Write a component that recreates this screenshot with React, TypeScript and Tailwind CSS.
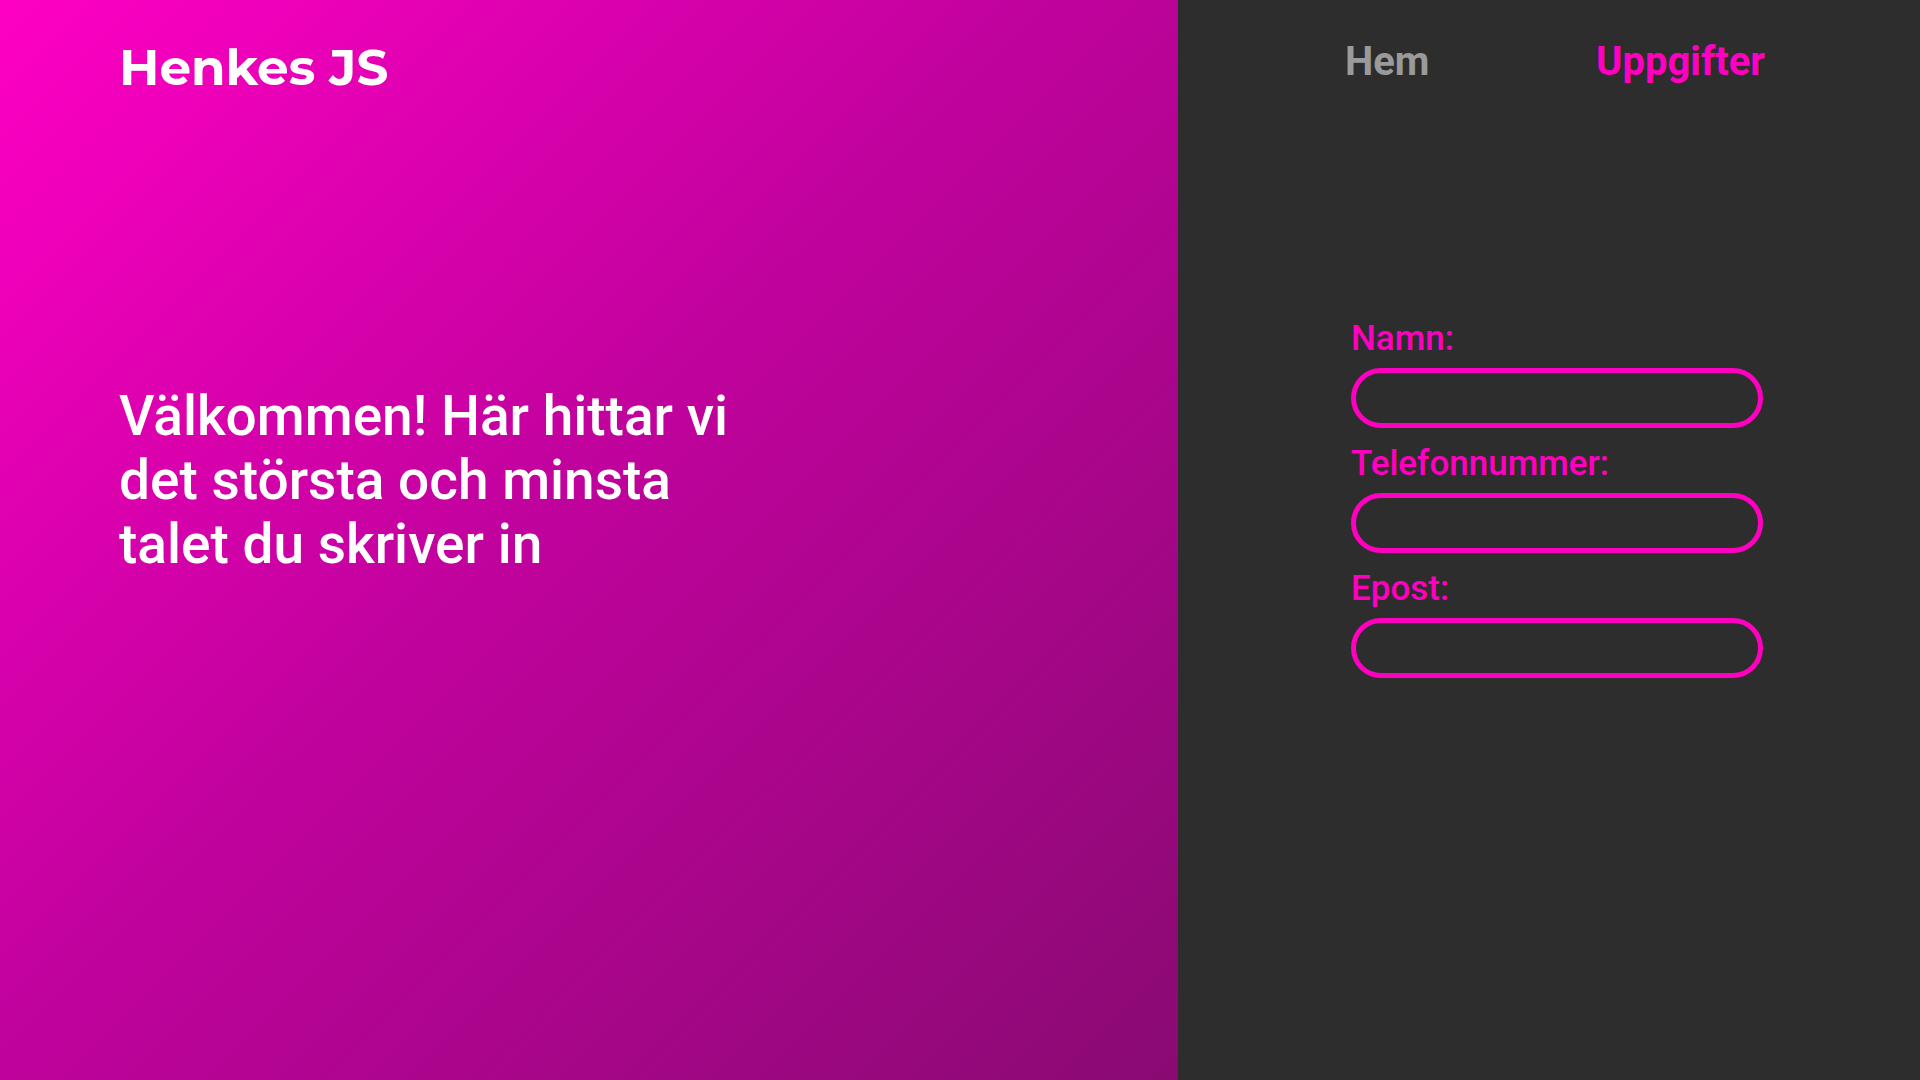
import React from "react"

const fields = ["Namn:", "Telefonnummer:", "Epost:"]

export default function App() {
  return (
    <main className="flex h-[1080px] w-[1920px] overflow-hidden font-['Roboto',sans-serif]">
      <section className="flex w-[1178px] flex-col bg-[linear-gradient(135deg,#ff00c4_0%,#c2029e_45%,#890a72_100%)] pl-[119px]">
        <h1 className="mt-[38px] font-['Montserrat','Open_Sans',sans-serif] text-[50px] leading-[60px] font-bold text-white">
          Henkes JS
        </h1>
        <p className="mt-[286px] w-[640px] text-[55px] leading-[64px] font-medium text-white">
          Välkommen! Här hittar vi det största och minsta talet du skriver in
        </p>
      </section>

      <section className="flex flex-1 flex-col bg-[#2d2d2d]">
        <nav className="mt-[38px] ml-[167px] flex w-[420px] items-center justify-between text-[40px] leading-[48px] font-bold">
          <a className="text-[#9a9a9a]">Hem</a>
          <a className="text-[#ff00c0]">Uppgifter</a>
        </nav>

        <form className="mt-[233px] ml-[173px] flex w-[412px] flex-col">
          {fields.map((f) => (
            <label key={f} className="mb-[16px] flex flex-col">
              <span className="text-[35px] leading-[40px] font-medium text-[#ff00c0]">{f}</span>
              <input
                type="text"
                className="mt-[9px] h-[60px] w-full rounded-full border-[5px] border-[#ff00c0] bg-transparent px-6 text-2xl text-white outline-none"
              />
            </label>
          ))}
        </form>
      </section>
    </main>
  )
}
